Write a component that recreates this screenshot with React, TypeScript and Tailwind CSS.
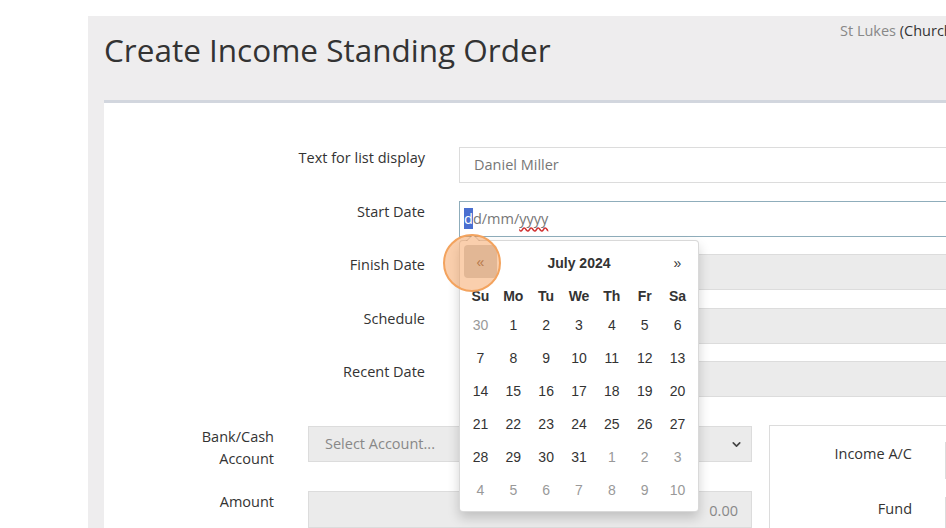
import React from "react";
import { ChevronDown } from "lucide-react";

const weeks = [
  [30, 1, 2, 3, 4, 5, 6],
  [7, 8, 9, 10, 11, 12, 13],
  [14, 15, 16, 17, 18, 19, 20],
  [21, 22, 23, 24, 25, 26, 27],
  [28, 29, 30, 31, 1, 2, 3],
  [4, 5, 6, 7, 8, 9, 10],
];

const dayNames = ["Su", "Mo", "Tu", "We", "Th", "Fr", "Sa"];

// outside the current month: first cell of week 1, last cells of weeks 5 and 6
const isOtherMonth = (row: number, col: number) =>
  (row === 0 && col === 0) || (row === 4 && col > 3) || row === 5;

const DatePicker = () => (
  <div className="absolute left-0 top-[calc(100%+3px)] z-10 w-[240px] h-[272px] bg-white border border-black/15 rounded-[4px] shadow-[0_6px_12px_rgba(0,0,0,0.18)] px-[4px] pt-[4px] font-['Liberation_Sans',Arial,sans-serif] text-[14px] text-[#333]">
    {/* caret */}
    <div className="absolute -top-[7px] left-[6px] w-0 h-0 border-x-[7px] border-x-transparent border-b-[7px] border-b-black/20" />
    <div className="absolute -top-[6px] left-[7px] w-0 h-0 border-x-[6px] border-x-transparent border-b-[6px] border-b-white" />

    <div className="flex h-[33px] items-center">
      <div className="w-[33px] h-[33px] flex items-center justify-center bg-[#d6d6d6] rounded-[4px] text-[#8a6a55] pt-[3px]">
        «
      </div>
      <div className="flex-1 text-center font-bold pt-[4px]">July 2024</div>
      <div className="w-[33px] text-center pt-[4px]">»</div>
    </div>
    <div className="flex mt-[7px] h-[24px] items-center font-bold">
      {dayNames.map((d) => (
        <div key={d} className="w-[33px] text-center">
          {d}
        </div>
      ))}
    </div>
    {weeks.map((week, r) => (
      <div key={r} className="flex h-[33px] items-center">
        {week.map((day, c) => (
          <div
            key={c}
            className={
              isOtherMonth(r, c)
                ? "w-[33px] text-center text-[#999]"
                : "w-[33px] text-center"
            }
          >
            {day}
          </div>
        ))}
      </div>
    ))}
  </div>
);

const FormRow = ({
  label,
  children,
}: {
  label: string;
  children: React.ReactNode;
}) => (
  <div className="flex gap-[34px]">
    <div className="w-[321px] text-right leading-[22px] shrink-0">{label}</div>
    <div className="relative w-[560px] shrink-0">{children}</div>
  </div>
);

const readonlyInput =
  "h-[36px] w-full bg-[#ebebeb] border border-[#dcdcdc]";

export default function App() {
  return (
    <div className="w-[946px] h-[528px] overflow-hidden bg-white pl-[88px] pt-[16px] font-['Open_Sans',sans-serif] text-[14.5px] text-[#333]">
      <div className="relative w-[1000px] h-[600px] bg-[#eeedee] pl-[16px]">
        <div className="flex h-[84px] items-start">
          <h1 className="w-[736px] shrink-0 pt-[16px] text-[31.5px] leading-[35px] text-[#333]">
            Create Income Standing Order
          </h1>
          <div className="pt-[5px] leading-[20px] whitespace-nowrap">
            <span className="text-[#888]">St Lukes</span> (Church)
          </div>
        </div>

        <div className="bg-white border-t-[3px] border-[#d2d6de] h-[520px] pt-[44px]">
          <div className="flex flex-col gap-[17.5px]">
            <FormRow label="Text for list display">
              <div className="h-[36px] w-full border border-[#dcdcdc] bg-white flex items-center px-[14px] text-[#777]">
                Daniel Miller
              </div>
            </FormRow>
            <FormRow label="Start Date">
              <div className="h-[36px] w-full border border-[#8fadbb] bg-white flex items-center pl-[4px] text-[#777]">
                <span className="bg-[#4a6fd0] text-white">d</span>
                <span>d/mm/</span>
                <span className="underline decoration-wavy decoration-[#d03030] underline-offset-[3px]">
                  yyyy
                </span>
              </div>
              <DatePicker />
            </FormRow>
            <FormRow label="Finish Date">
              <div className={readonlyInput} />
            </FormRow>
            <FormRow label="Schedule">
              <div className={readonlyInput} />
            </FormRow>
            <FormRow label="Recent Date">
              <div className={readonlyInput} />
            </FormRow>
          </div>

          <div className="flex items-start mt-[28px]">
            <div className="flex flex-col gap-[29px]">
              <div className="flex gap-[34px] mt-[1px] h-[36px]">
                <div className="w-[170px] text-right leading-[22px]">
                  Bank/Cash
                  <br />
                  Account
                </div>
                <div className="w-[444px] h-[36px] bg-[#ebebeb] border border-[#dcdcdc] flex items-center justify-between pl-[16px] pr-[8px] text-[#888]">
                  <span>Select Account...</span>
                  <ChevronDown size={13} strokeWidth={3} className="text-[#444]" />
                </div>
              </div>
              <div className="flex gap-[34px]">
                <div className="w-[170px] text-right leading-[22px]">Amount</div>
                <div className="w-[444px] h-[37px] bg-[#ebebeb] border border-[#dcdcdc] flex items-center justify-end pr-[13px] pt-[2px] text-[#888]">
                  0.00
                </div>
              </div>
            </div>

            <div className="ml-[17px] w-[300px] h-[200px] border border-[#dcdcdc] pt-[16px] flex flex-col gap-[18px]">
              <div className="flex gap-[33px]">
                <div className="w-[142px] text-right leading-[22px] pt-[1px]">Income A/C</div>
                <div className="w-[100px] h-[37px] border border-[#dcdcdc]" />
              </div>
              <div className="flex gap-[33px]">
                <div className="w-[142px] text-right leading-[22px] pt-[1px]">Fund</div>
                <div className="w-[100px] h-[37px] border border-[#dcdcdc]" />
              </div>
            </div>
          </div>
        </div>

        {/* click indicator */}
        <div className="absolute left-[355px] top-[218px] w-[58px] h-[58px] rounded-full bg-[rgba(242,140,60,0.42)] border-2 border-[#f3a35e] z-20" />
      </div>
    </div>
  );
}
